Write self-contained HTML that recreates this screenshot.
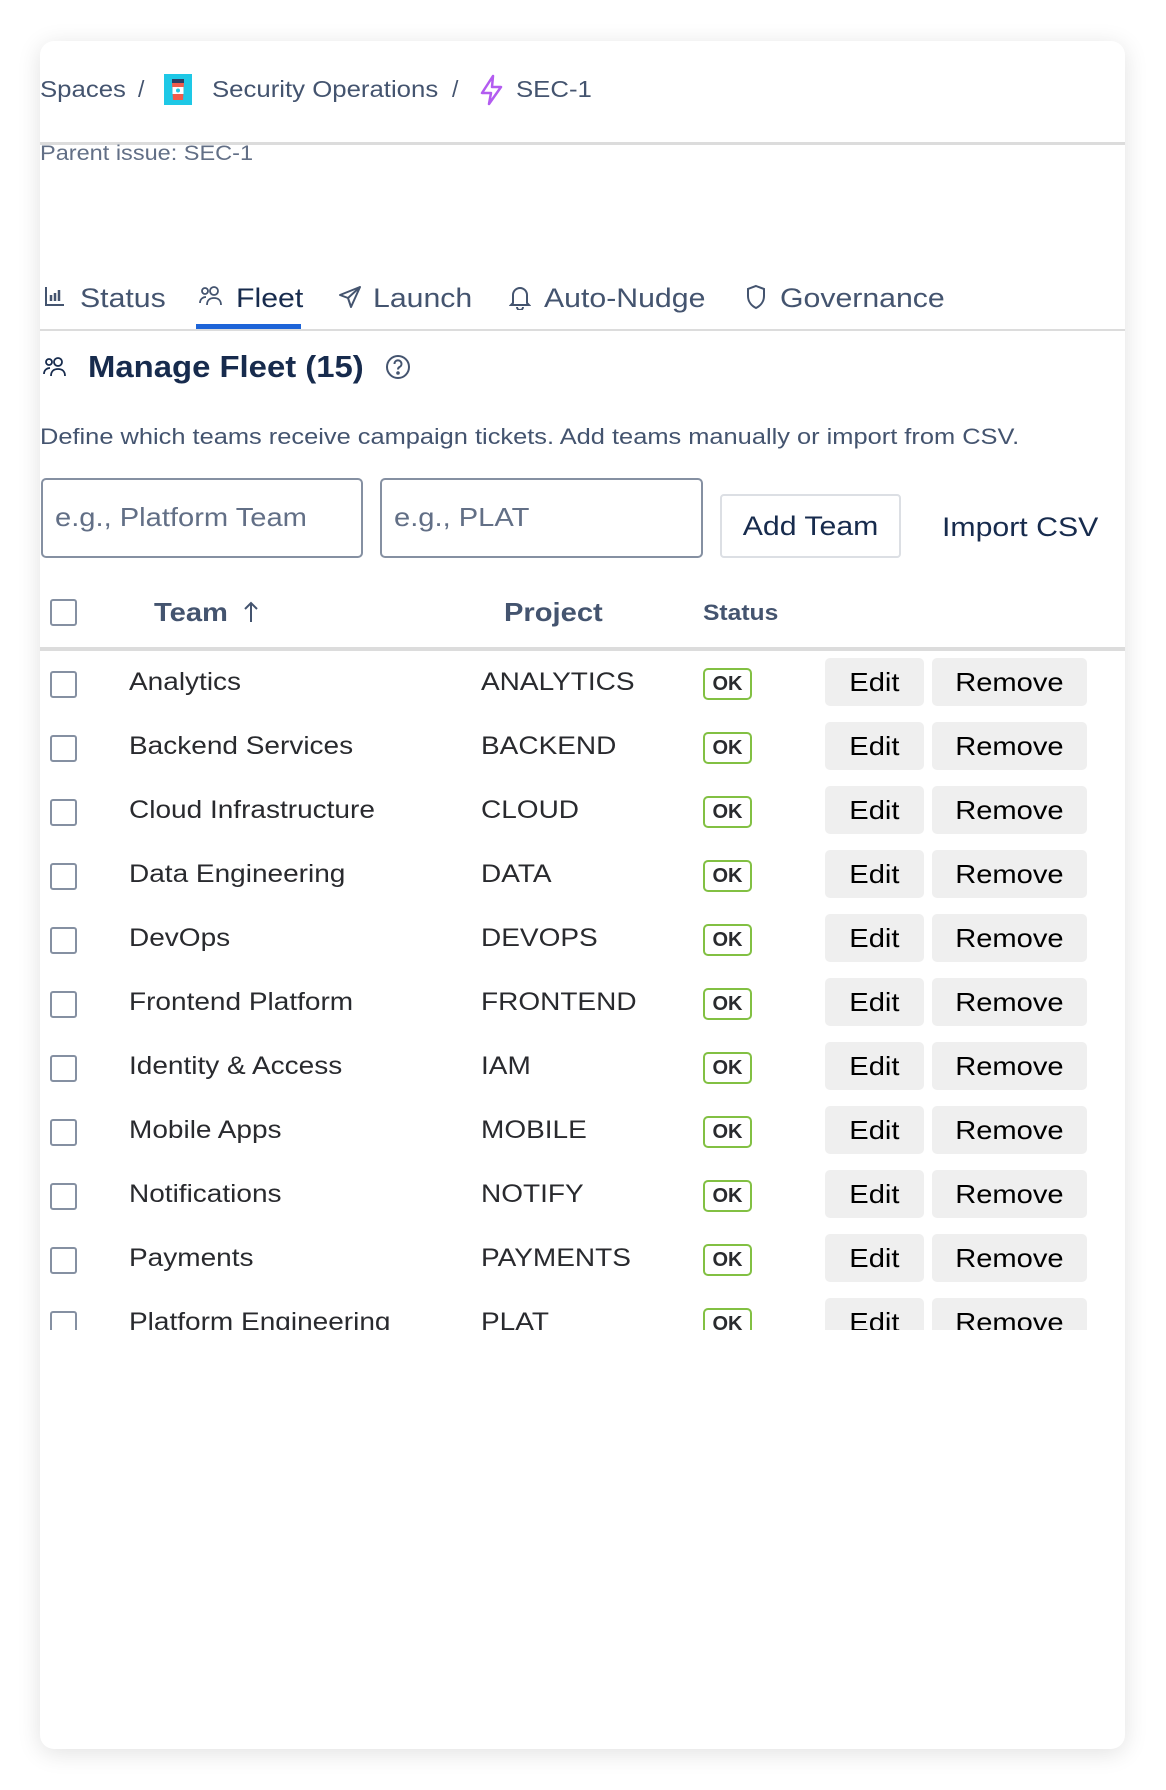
<!DOCTYPE html>
<html><head><meta charset="utf-8"><style>
*{box-sizing:border-box;margin:0;padding:0}
body{width:1166px;height:1790px;background:#fff;font-family:"Liberation Sans",sans-serif;position:relative;overflow:hidden;color:#172b4d}
.card{position:absolute;left:40px;top:41px;width:1085px;height:1708px;background:#fff;border-radius:14px;box-shadow:0 4px 24px rgba(0,0,0,0.12);overflow:hidden}
.abs{position:absolute;white-space:nowrap}
.s{transform:scaleX(1.12);transform-origin:0 50%}
.sc{display:inline-block;transform:scaleX(1.12)}
.bc{top:34px;font-size:23px;color:#44546f;line-height:28px}
.tab{top:241px;font-size:27px;color:#44546f;line-height:32px}
.row{position:absolute;left:0;width:1085px;height:64px}
.row .cb{position:absolute;left:10px;top:20px;width:27px;height:27px;border:2px solid #8590a2;border-radius:3px}
.row .t{position:absolute;left:89px;top:17px;font-size:25px;color:#292a2e;transform:scaleX(1.12);transform-origin:0 50%}
.row .p{position:absolute;left:441px;top:17px;font-size:25px;color:#292a2e;transform:scaleX(1.12);transform-origin:0 50%}
.row .ok{position:absolute;left:663px;top:17px;width:49px;height:32px;border:2px solid #82c043;border-radius:5px;font-size:20px;font-weight:bold;text-align:center;line-height:28px;color:#292a2e}
.row .e{position:absolute;left:785px;top:7px;width:99px;height:48px;background:#efefef;border-radius:5px;font-size:26px;text-align:center;line-height:48px;color:#000}
.row .r{position:absolute;left:892px;top:7px;width:155px;height:48px;background:#efefef;border-radius:5px;font-size:26px;text-align:center;line-height:48px;color:#000}
</style></head><body>
<div class="card">
  <div class="abs bc s" style="left:0">Spaces</div>
  <div class="abs bc" style="left:98px">/</div>
  <svg class="abs" style="left:124px;top:33px" width="28" height="31" viewBox="0 0 28 31"><rect width="28" height="31" fill="#1ec8e6"/><rect x="8" y="5" width="12" height="4" fill="#2c3e63"/><path d="M8 9h12l-1 17H9z" fill="#f15b4b"/><rect x="8.5" y="13" width="11" height="7" fill="#fff"/><circle cx="14" cy="16.5" r="2" fill="#1ec8e6"/></svg>
  <div class="abs bc s" style="left:172px">Security Operations</div>
  <div class="abs bc" style="left:412px">/</div>
  <svg class="abs" style="left:439px;top:33px" width="26" height="32" viewBox="0 0 26 32"><path d="M14 2L3 19h9l-2 11 12-17h-9z" fill="none" stroke="#b35cf0" stroke-width="2.5" stroke-linejoin="round"/></svg>
  <div class="abs bc s" style="left:476px">SEC-1</div>
  <div class="abs" style="left:0;top:101px;width:1085px;height:3px;background:#dcdcdc"></div>
  <div class="abs s" style="left:0;top:101px;font-size:21px;color:#626f86;line-height:24px">Parent issue: SEC-1</div>

  <svg class="abs" style="left:4px;top:244px" width="22" height="22" viewBox="0 0 22 22" fill="none" stroke="#44546f" stroke-width="2"><path d="M2 2v18h18"/><path d="M7 16v-6M11 16V8M15 16V5" stroke-width="2.5"/></svg>
  <div class="abs tab s" style="left:40px">Status</div>
  <svg class="abs" style="left:159px;top:244px" width="24" height="22" viewBox="0 0 24 22" fill="none" stroke="#44546f" stroke-width="1.8"><circle cx="6" cy="6" r="3"/><circle cx="15" cy="6" r="4"/><path d="M1 18c0-4 3-6 6-6M8 20c0-5 3-7 7-7s7 2 7 7"/></svg>
  <div class="abs tab s" style="left:196px;color:#172b4d">Fleet</div>
  <div class="abs" style="left:156px;top:283px;width:105px;height:6px;background:#1d64d8"></div>
  <svg class="abs" style="left:298px;top:244px" width="24" height="24" viewBox="0 0 24 24" fill="none" stroke="#44546f" stroke-width="2" stroke-linejoin="round"><path d="M22 2L2 10l8 3 3 9z"/><path d="M22 2L10 13"/></svg>
  <div class="abs tab s" style="left:333px">Launch</div>
  <svg class="abs" style="left:469px;top:243px" width="22" height="26" viewBox="0 0 22 26" fill="none" stroke="#44546f" stroke-width="2"><path d="M4 19V11a7 7 0 0 1 14 0v8l2 2H2z"/><path d="M8 23a3 3 0 0 0 6 0"/></svg>
  <div class="abs tab s" style="left:504px">Auto-Nudge</div>
  <svg class="abs" style="left:705px;top:243px" width="22" height="26" viewBox="0 0 22 26" fill="none" stroke="#44546f" stroke-width="2"><path d="M11 2l8 3v7c0 6-4 10-8 12-4-2-8-6-8-12V5z"/></svg>
  <div class="abs tab s" style="left:740px">Governance</div>
  <div class="abs" style="left:0;top:288px;width:1085px;height:2px;background:#dcdcdc"></div>

  <svg class="abs" style="left:3px;top:315px" width="24" height="22" viewBox="0 0 24 22" fill="none" stroke="#172b4d" stroke-width="1.8"><circle cx="6" cy="6" r="3"/><circle cx="15" cy="6" r="4"/><path d="M1 18c0-4 3-6 6-6M8 20c0-5 3-7 7-7s7 2 7 7"/></svg>
  <div class="abs s" style="left:48px;top:307px;font-size:31px;font-weight:bold;color:#172b4d;line-height:38px;transform:scaleX(1.06)">Manage Fleet (15)</div>
  <svg class="abs" style="left:345px;top:313px" width="26" height="26" viewBox="0 0 26 26" fill="none" stroke="#44546f" stroke-width="2"><circle cx="13" cy="13" r="11"/><path d="M9.5 10a3.5 3.5 0 1 1 5 3c-1 .6-1.5 1.2-1.5 2.5"/><circle cx="13" cy="19" r="0.8" fill="#44546f"/></svg>
  <div class="abs" style="left:0;top:383px;font-size:22px;color:#44546f;line-height:26px;transform:scaleX(1.155);transform-origin:0 50%">Define which teams receive campaign tickets. Add teams manually or import from CSV.</div>

  <div class="abs" style="left:1px;top:437px;width:322px;height:80px;border:2px solid #8590a2;border-radius:5px;font-size:26px;color:#626f86;padding:0 0 0 12px;line-height:74px"><span class="sc" style="transform-origin:0 50%">e.g., Platform Team</span></div>
  <div class="abs" style="left:340px;top:437px;width:323px;height:80px;border:2px solid #8590a2;border-radius:5px;font-size:26px;color:#626f86;padding:0 0 0 12px;line-height:74px"><span class="sc" style="transform-origin:0 50%">e.g., PLAT</span></div>
  <div class="abs" style="left:680px;top:453px;width:181px;height:64px;border:2px solid #dcdfe4;border-radius:4px;font-size:27px;color:#172b4d;text-align:center;line-height:60px"><span class="sc">Add Team</span></div>
  <div class="abs s" style="left:902px;top:470px;font-size:27px;color:#172b4d;line-height:32px">Import CSV</div>

  <div class="abs" style="left:10px;top:558px;width:27px;height:27px;border:2px solid #8590a2;border-radius:3px"></div>
  <div class="abs s" style="left:114px;top:555px;font-size:26px;font-weight:bold;color:#44546f;line-height:32px">Team</div>
  <svg class="abs" style="left:203px;top:560px" width="16" height="22" viewBox="0 0 16 22" fill="none" stroke="#44546f" stroke-width="2"><path d="M8 21V2M2 8l6-6 6 6"/></svg>
  <div class="abs s" style="left:464px;top:555px;font-size:26px;font-weight:bold;color:#44546f;line-height:32px">Project</div>
  <div class="abs s" style="left:663px;top:558px;font-size:22px;font-weight:bold;color:#44546f;line-height:28px">Status</div>
  <div class="abs" style="left:0;top:606px;width:1085px;height:4px;background:#dcdcdc"></div>

  <div class="abs" style="left:0;top:610px;width:1085px;height:679px;overflow:hidden">
    <div class="row" style="top:0"><div class="cb"></div><div class="t">Analytics</div><div class="p">ANALYTICS</div><div class="ok">OK</div><div class="e"><span class="sc">Edit</span></div><div class="r"><span class="sc">Remove</span></div></div>
    <div class="row" style="top:64px"><div class="cb"></div><div class="t">Backend Services</div><div class="p">BACKEND</div><div class="ok">OK</div><div class="e"><span class="sc">Edit</span></div><div class="r"><span class="sc">Remove</span></div></div>
    <div class="row" style="top:128px"><div class="cb"></div><div class="t">Cloud Infrastructure</div><div class="p">CLOUD</div><div class="ok">OK</div><div class="e"><span class="sc">Edit</span></div><div class="r"><span class="sc">Remove</span></div></div>
    <div class="row" style="top:192px"><div class="cb"></div><div class="t">Data Engineering</div><div class="p">DATA</div><div class="ok">OK</div><div class="e"><span class="sc">Edit</span></div><div class="r"><span class="sc">Remove</span></div></div>
    <div class="row" style="top:256px"><div class="cb"></div><div class="t">DevOps</div><div class="p">DEVOPS</div><div class="ok">OK</div><div class="e"><span class="sc">Edit</span></div><div class="r"><span class="sc">Remove</span></div></div>
    <div class="row" style="top:320px"><div class="cb"></div><div class="t">Frontend Platform</div><div class="p">FRONTEND</div><div class="ok">OK</div><div class="e"><span class="sc">Edit</span></div><div class="r"><span class="sc">Remove</span></div></div>
    <div class="row" style="top:384px"><div class="cb"></div><div class="t">Identity &amp; Access</div><div class="p">IAM</div><div class="ok">OK</div><div class="e"><span class="sc">Edit</span></div><div class="r"><span class="sc">Remove</span></div></div>
    <div class="row" style="top:448px"><div class="cb"></div><div class="t">Mobile Apps</div><div class="p">MOBILE</div><div class="ok">OK</div><div class="e"><span class="sc">Edit</span></div><div class="r"><span class="sc">Remove</span></div></div>
    <div class="row" style="top:512px"><div class="cb"></div><div class="t">Notifications</div><div class="p">NOTIFY</div><div class="ok">OK</div><div class="e"><span class="sc">Edit</span></div><div class="r"><span class="sc">Remove</span></div></div>
    <div class="row" style="top:576px"><div class="cb"></div><div class="t">Payments</div><div class="p">PAYMENTS</div><div class="ok">OK</div><div class="e"><span class="sc">Edit</span></div><div class="r"><span class="sc">Remove</span></div></div>
    <div class="row" style="top:640px"><div class="cb"></div><div class="t">Platform Engineering</div><div class="p">PLAT</div><div class="ok">OK</div><div class="e"><span class="sc">Edit</span></div><div class="r"><span class="sc">Remove</span></div></div>
  </div>
</div>
</body></html>
